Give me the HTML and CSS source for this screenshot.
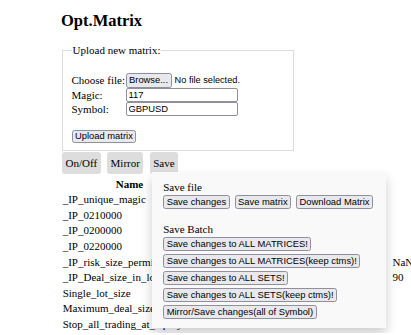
FILE: index.html
```html
<!DOCTYPE html>
<html lang="en">
<head>
  <meta charset="UTF-8">
  <meta name="viewport" content="width=device-width, initial-scale=1.0">
  <title>Opt.Matrix</title>
  <link rel="stylesheet" href="styles.css">
</head>
<body>
  <div class="page">
    <h2 class="title">Opt.Matrix</h2>

    <fieldset class="upload">
      <legend>Upload new matrix:</legend>
      <form class="upload-form">
        <div class="fields">
          <label>Choose file:</label>
          <div class="file-pick">
            <button type="button" class="btn browse">Browse...</button>
            <span class="file-name">No file selected.</span>
          </div>
          <label for="magic">Magic:</label>
          <input id="magic" class="txt" type="text" value="117">
          <label for="symbol">Symbol:</label>
          <input id="symbol" class="txt" type="text" value="GBPUSD">
        </div>
        <button type="button" class="btn upload-btn">Upload matrix</button>
      </form>
    </fieldset>

    <div class="menu">
      <button type="button" class="menu-btn">On/Off</button>
      <button type="button" class="menu-btn">Mirror</button>
      <div class="dropdown">
        <button type="button" class="menu-btn">Save</button>
        <!-- save menu, shown open -->
        <div class="dropdown-content">
          <div class="group-title">Save file</div>
          <div class="btn-row">
            <button type="button" class="btn">Save changes</button>
            <button type="button" class="btn">Save matrix</button>
            <button type="button" class="btn">Download Matrix</button>
          </div>
          <div class="group-title batch">Save Batch</div>
          <div class="btn-col">
            <button type="button" class="btn">Save changes to ALL MATRICES!</button>
            <button type="button" class="btn">Save changes to ALL MATRICES(keep ctms)!</button>
            <button type="button" class="btn">Save changes to ALL SETS!</button>
            <button type="button" class="btn">Save changes to ALL SETS(keep ctms)!</button>
            <button type="button" class="btn">Mirror/Save changes(all of Symbol)</button>
          </div>
        </div>
      </div>
    </div>

    <table class="params">
      <thead>
        <tr>
          <th class="col-name">Name</th>
          <th class="col-val"></th>
          <th class="col-extra"></th>
        </tr>
      </thead>
      <tbody>
        <tr><td>_IP_unique_magic</td><td></td><td></td></tr>
        <tr><td>_IP_0210000</td><td></td><td></td></tr>
        <tr><td>_IP_0200000</td><td></td><td></td></tr>
        <tr><td>_IP_0220000</td><td></td><td></td></tr>
        <tr><td>_IP_risk_size_permitted</td><td></td><td>NaN</td></tr>
        <tr><td>_IP_Deal_size_in_lots</td><td></td><td>90</td></tr>
        <tr><td>Single_lot_size</td><td></td><td></td></tr>
        <tr><td>Maximum_deal_size</td><td></td><td></td></tr>
        <tr><td>Stop_all_trading_at_equity</td><td>300</td><td></td></tr>
      </tbody>
    </table>
  </div>
</body>
</html>
```

FILE: styles.css
```css
* {
  box-sizing: border-box;
}
html, body {
  margin: 0;
  padding: 0;
  overflow: hidden;
}
body {
  font-family: "Liberation Serif", "Times New Roman", serif;
  font-size: 11px;
  color: #000;
  background: #fff;
}
.page {
  padding-left: 62px;
  width: 520px;
}
.title {
  margin: 11px 0 14px -1px;
  font-size: 16.5px;
  line-height: 19px;
  font-weight: bold;
}

/* upload box */
.upload {
  width: 232px;
  margin: 0;
  padding: 0 8.5px 6.5px;
  border: 1px solid #dcdcdc;
  min-width: 0;
}
.upload legend {
  padding: 0 1px;
  line-height: 12.65px;
}
.upload-form {
  margin-top: 16.3px;
}
.fields {
  display: grid;
  grid-template-columns: 54px auto;
  grid-template-rows: 15px 14px 14px;
  align-items: center;
}
.file-pick {
  display: flex;
  align-items: center;
  gap: 3px;
}
.file-name {
  font-family: "Liberation Sans", Arial, sans-serif;
  font-size: 9.2px;
}
.txt {
  width: 112px;
  height: 14px;
  margin: 0;
  padding: 0 2px;
  border: 1px solid #8f8f9d;
  border-radius: 2px;
  font-family: "Liberation Sans", Arial, sans-serif;
  font-size: 9.4px;
  color: #000;
  background: #fff;
}
.btn {
  margin: 0;
  padding: 0.5px 2.5px;
  border: 1px solid #8f8f9d;
  border-radius: 2.5px;
  background: #e9e9ed;
  color: #000;
  font-family: "Liberation Sans", Arial, sans-serif;
  font-size: 9.4px;
  line-height: 10.5px;
  white-space: nowrap;
}
.browse {
  padding-top: 1.25px;
  padding-bottom: 1.25px;
}
.upload-btn {
  margin-top: 14px;
}

/* menu */
.menu {
  display: flex;
  gap: 6.2px;
  margin-top: 1px;
}
.menu-btn {
  height: 22px;
  margin: 0;
  padding: 0 3.6px;
  border: none;
  border-radius: 3px;
  background: #dddddd;
  color: #000;
  font-family: "Liberation Serif", "Times New Roman", serif;
  font-size: 11px;
}
.dropdown {
  position: relative;
}
.dropdown-content {
  position: absolute;
  left: 2.5px;
  top: 20.5px;
  width: 234px;
  padding: 8.5px 11px 9.5px;
  background: #f9f9f9;
  box-shadow: 0 5.5px 11px rgba(0, 0, 0, 0.2);
  z-index: 2;
}
.group-title {
  line-height: 12.65px;
}
.group-title.batch {
  margin-top: 14.5px;
}
.btn-row {
  display: flex;
  gap: 5px;
  margin-top: 1.5px;
}
.btn-col {
  display: flex;
  flex-direction: column;
  align-items: flex-start;
  gap: 3.5px;
  margin-top: 1.4px;
}

/* parameter table */
.params {
  table-layout: fixed;
  width: 392px;
  margin: 2px 0 0 -1px;
  border-spacing: 1px;
}
.params th,
.params td {
  padding: 0.7px;
  line-height: 13.2px;
  white-space: nowrap;
  overflow: hidden;
  text-align: left;
}
.params th {
  text-align: center;
}
.col-name {
  width: 134.4px;
}
.col-val {
  width: 192.1px;
}
.col-extra {
  width: 60px;
}
```
